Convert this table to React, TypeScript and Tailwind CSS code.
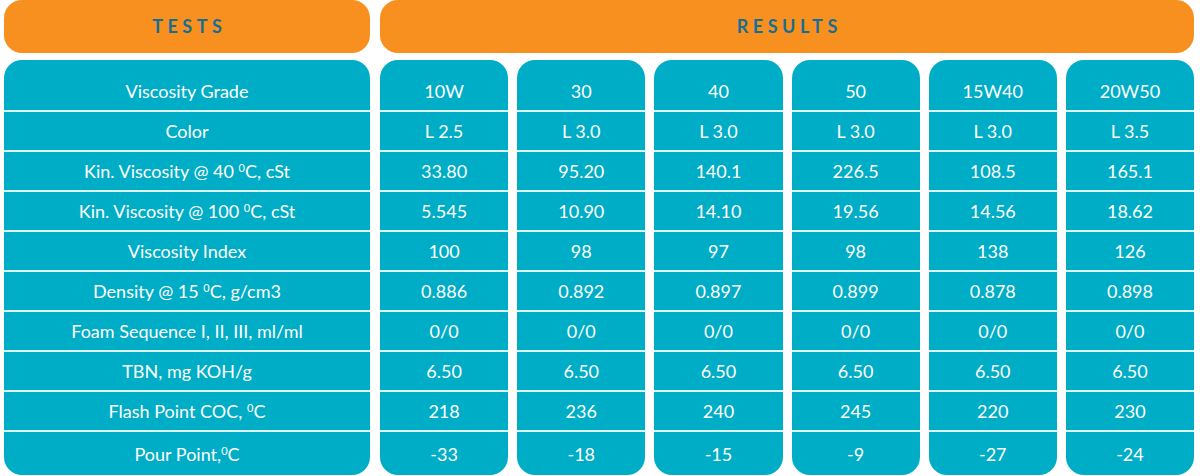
import React from "react";

const tests = [
  "Viscosity Grade",
  "Color",
  "Kin. Viscosity @ 40 |C, cSt",
  "Kin. Viscosity @ 100 |C, cSt",
  "Viscosity Index",
  "Density @ 15 |C, g/cm3",
  "Foam Sequence I, II, III, ml/ml",
  "TBN, mg KOH/g",
  "Flash Point COC, |C",
  "Pour Point,|C",
];

const results: string[][] = [
  ["10W", "L 2.5", "33.80", "5.545", "100", "0.886", "0/0", "6.50", "218", "-33"],
  ["30", "L 3.0", "95.20", "10.90", "98", "0.892", "0/0", "6.50", "236", "-18"],
  ["40", "L 3.0", "140.1", "14.10", "97", "0.897", "0/0", "6.50", "240", "-15"],
  ["50", "L 3.0", "226.5", "19.56", "98", "0.899", "0/0", "6.50", "245", "-9"],
  ["15W40", "L 3.0", "108.5", "14.56", "138", "0.878", "0/0", "6.50", "220", "-27"],
  ["20W50", "L 3.5", "165.1", "18.62", "126", "0.898", "0/0", "6.50", "230", "-24"],
];

function Label({ text }: { text: string }) {
  const parts = text.split("|");
  if (parts.length === 1) return <span>{text}</span>;
  return (
    <span className="whitespace-pre">
      {parts[0]}
      <span className="relative top-[-6px] text-[11px]">0</span>
      {parts[1]}
    </span>
  );
}

function Column({ items, className }: { items: string[]; className: string }) {
  return (
    <div className={`flex flex-col rounded-[18px] bg-[#00adc6] overflow-hidden ${className}`}>
      {items.map((t, i) => {
        const last = i === items.length - 1;
        const first = i === 0;
        const h = first ? "h-[52px] pt-[12px]" : last ? "flex-1" : "h-[40px]";
        return (
          <div
            key={i}
            className={`flex items-center justify-center ${h} ${last ? "" : "border-b-2 border-[#dff4f8]"} text-white text-[18px] leading-none whitespace-nowrap`}
          >
            <Label text={t} />
          </div>
        );
      })}
    </div>
  );
}

export default function App() {
  return (
    <div
      className="w-[1200px] h-[476px] bg-white pl-[4px] pr-[6px] flex flex-col"
      style={{ fontFamily: "Lato, 'Open Sans', sans-serif" }}
    >
      <div className="flex gap-[10px] h-[53px]">
        <div className="w-[366px] rounded-[18px] bg-[#f7901e] flex items-center justify-center">
          <span className="text-[#176d94] font-bold text-[18px] tracking-[0.25em] pl-[0.25em]">TESTS</span>
        </div>
        <div className="flex-1 rounded-[18px] bg-[#f7901e] flex items-center justify-center">
          <span className="text-[#176d94] font-bold text-[18px] tracking-[0.25em] pl-[0.25em]">RESULTS</span>
        </div>
      </div>
      <div className="flex gap-[10px] mt-[7px] h-[415px]">
        <Column items={tests} className="w-[366px]" />
        <div className="flex-1 flex gap-[9px]">
          {results.map((col, i) => (
            <Column key={i} items={col} className="flex-1" />
          ))}
        </div>
      </div>
    </div>
  );
}
